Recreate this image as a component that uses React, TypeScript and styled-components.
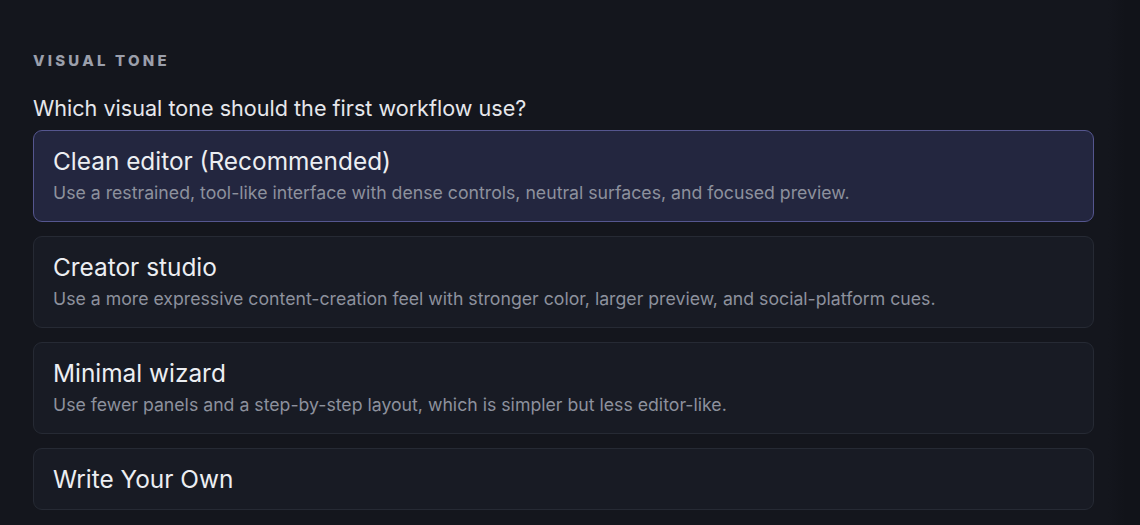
import React from "react";
import styled, { createGlobalStyle } from "styled-components";

const Global = createGlobalStyle`
  html, body { margin: 0; padding: 0; }
  body {
    background: #14161d;
    font-family: Inter, "Noto Sans", "Liberation Sans", sans-serif;
    -webkit-font-smoothing: antialiased;
  }
`;

const Page = styled.div`
  width: 1140px;
  height: 525px;
  box-sizing: border-box;
  padding: 52px 46px 0 33px;
  background: linear-gradient(to right, #14161d 0, #14161d 1108px, #111319 1125px, #111319 100%);
  overflow: hidden;
`;

const Label = styled.div`
  font-size: 15px;
  font-weight: 800;
  letter-spacing: 3.2px;
  color: #9b9fab;
  line-height: 18px;
  text-transform: uppercase;
`;

const Question = styled.div`
  margin-top: 24px;
  font-size: 21.6px;
  line-height: 28px;
  color: #e6e7ec;
  font-weight: 400;
`;

const List = styled.div`
  margin-top: 8px;
  display: flex;
  flex-direction: column;
  gap: 14px;
`;

const Card = styled.div<{ $selected?: boolean; $compact?: boolean }>`
  box-sizing: border-box;
  width: 1061px;
  border-radius: 9px;
  padding: 15px 19px 15px;
  border: 1px solid ${(p) => (p.$selected ? "#55568f" : "#262a34")};
  background: ${(p) => (p.$selected ? "#23263f" : "#181b24")};
  display: flex;
  flex-direction: column;
  gap: 5px;
  min-height: ${(p) => (p.$compact ? "62px" : "92px")};
`;

const Title = styled.div`
  font-size: 24.4px;
  line-height: 30px;
  color: #eceef2;
`;

const Desc = styled.div`
  font-size: 17.7px;
  line-height: 24px;
  color: #8d919d;
`;

const options = [
  {
    title: "Clean editor (Recommended)",
    desc: "Use a restrained, tool-like interface with dense controls, neutral surfaces, and focused preview.",
    selected: true,
  },
  {
    title: "Creator studio",
    desc: "Use a more expressive content-creation feel with stronger color, larger preview, and social-platform cues.",
  },
  {
    title: "Minimal wizard",
    desc: "Use fewer panels and a step-by-step layout, which is simpler but less editor-like.",
  },
  { title: "Write Your Own" },
];

export default function App() {
  return (
    <>
      <Global />
      <Page>
        <Label>Visual Tone</Label>
        <Question>Which visual tone should the first workflow use?</Question>
        <List>
          {options.map((o) => (
            <Card key={o.title} $selected={o.selected} $compact={!o.desc}>
              <Title>{o.title}</Title>
              {o.desc && <Desc>{o.desc}</Desc>}
            </Card>
          ))}
        </List>
      </Page>
    </>
  );
}
